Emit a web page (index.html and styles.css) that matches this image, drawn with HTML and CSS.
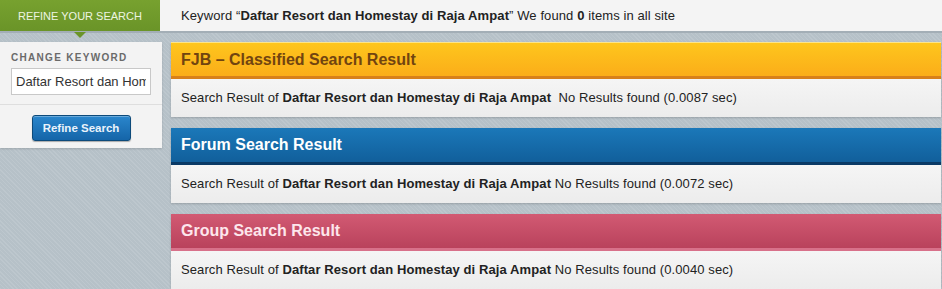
FILE: index.html
```html
<!DOCTYPE html>
<html>
<head>
<meta charset="utf-8">
<link rel="stylesheet" href="styles.css">
</head>
<body>
<div class="topbar">
  <div class="tab">Refine your search<span class="tab-arrow"></span></div>
  <div class="summary">Keyword “<b>Daftar Resort dan Homestay di Raja Ampat</b>” We found <b>0</b> items in all site</div>
</div>
<div class="content">
  <aside class="sidebar">
    <div class="side-top">
      <div class="side-label">Change Keyword</div>
      <input class="kw-input" type="text" value="Daftar Resort dan Homestay di Raja Ampat">
    </div>
    <div class="side-bottom">
      <button class="btn">Refine Search</button>
    </div>
  </aside>
  <main class="results">
    <section class="panel">
      <div class="panel-head head-fjb">FJB – Classified Search Result</div>
      <div class="panel-body">Search Result of <b>Daftar Resort dan Homestay di Raja Ampat</b>&nbsp; No Results found (0.0087 sec)</div>
    </section>
    <section class="panel">
      <div class="panel-head head-forum">Forum Search Result</div>
      <div class="panel-body">Search Result of <b>Daftar Resort dan Homestay di Raja Ampat</b> No Results found (0.0072 sec)</div>
    </section>
    <section class="panel">
      <div class="panel-head head-group">Group Search Result</div>
      <div class="panel-body">Search Result of <b>Daftar Resort dan Homestay di Raja Ampat</b> No Results found (0.0040 sec)</div>
    </section>
  </main>
</div>
</body>
</html>
```

FILE: styles.css
```css
html, body {
  margin: 0;
  padding: 0;
}
body {
  width: 942px;
  height: 289px;
  overflow: hidden;
  font-family: "Liberation Sans", Arial, sans-serif;
  font-size: 13px;
  color: #222;
  background-color: #b6c1c8;
  background-image: repeating-linear-gradient(45deg, rgba(255,255,255,0.10) 0 1px, transparent 1px 3px);
}
.topbar {
  display: flex;
  height: 31px;
  background: #f4f4f4;
  border-bottom: 2px solid #a3aeb6;
  position: relative;
}
.tab {
  position: relative;
  width: 160px;
  background: linear-gradient(#77a12f, #6a9428);
  color: #eef5e2;
  text-transform: uppercase;
  font-size: 11px;
  display: flex;
  align-items: center;
  justify-content: center;
}
.tab-arrow {
  position: absolute;
  left: 74px;
  bottom: -7px;
  width: 0;
  height: 0;
  border-left: 6px solid transparent;
  border-right: 6px solid transparent;
  border-top: 6px solid #6a9428;
  z-index: 2;
}
.summary {
  padding-left: 21px;
  line-height: 31px;
  white-space: nowrap;
  letter-spacing: 0.1px;
}
.content {
  display: flex;
  padding-top: 9px;
}
.sidebar {
  width: 162px;
  height: 106px;
  margin-right: 9px;
  background: #f3f3f3;
  box-shadow: 0 1px 2px rgba(0,0,0,0.15);
  display: flex;
  flex-direction: column;
}
.side-top {
  padding: 10px 0 0 11px;
  height: 52px;
  border-bottom: 1px solid #dedede;
}
.side-label {
  font-size: 10px;
  font-weight: bold;
  color: #6a6a6a;
  letter-spacing: 1.3px;
  text-transform: uppercase;
  line-height: 12px;
}
.kw-input {
  display: block;
  margin-top: 4px;
  box-sizing: border-box;
  width: 140px;
  height: 27px;
  border: 1px solid #c8c8c8;
  background: #fff;
  font-family: "Liberation Sans", Arial, sans-serif;
  font-size: 13px;
  color: #333;
  padding: 0 4px;
  outline: none;
}
.side-bottom {
  flex: 1;
  display: flex;
  justify-content: center;
  padding-top: 10px;
}
.btn {
  width: 99px;
  height: 26px;
  border: 1px solid #0d4a7a;
  border-radius: 3px;
  background: linear-gradient(#2a86cc, #1565a8);
  color: #eaf3fb;
  font-family: "Liberation Sans", Arial, sans-serif;
  font-size: 11.5px;
  font-weight: bold;
  box-shadow: inset 0 1px 0 rgba(255,255,255,0.3), 0 1px 1px rgba(0,0,0,0.3);
  padding: 0;
}
.results {
  width: 770px;
  display: flex;
  flex-direction: column;
  gap: 11px;
}
.panel {
  box-shadow: 0 1px 2px rgba(0,0,0,0.18);
}
.panel-head {
  height: 34px;
  padding-left: 10px;
  display: flex;
  align-items: center;
  font-size: 16px;
  font-weight: bold;
}
.head-fjb {
  background: linear-gradient(#fec61d, #fbad19);
  border-top: 1px solid #fde58a;
  height: 33px;
  border-bottom: 3px solid #d8801a;
  color: #714410;
}
.head-forum {
  background: linear-gradient(#1b78b9, #115f9b);
  border-bottom: 3px solid #0a3a66;
  color: #fff;
}
.head-group {
  background: linear-gradient(#d25a73, #b9425c);
  border-bottom: 3px solid #d8718a;
  color: #fde6ec;
}
.panel-body {
  height: 38px;
  line-height: 38px;
  padding-left: 10px;
  background: linear-gradient(#f5f5f5, #ececec);
  white-space: nowrap;
  letter-spacing: 0.1px;
}
```
